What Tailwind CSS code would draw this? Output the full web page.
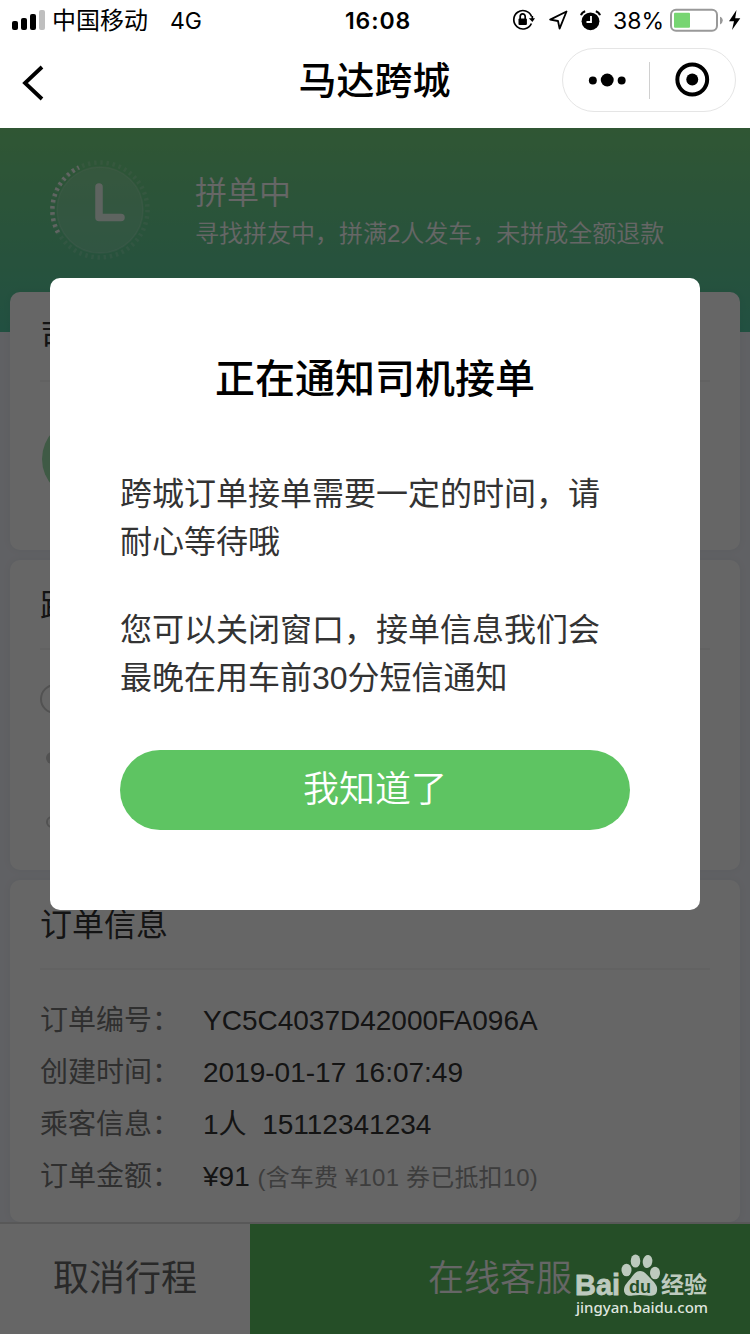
<!DOCTYPE html>
<html lang="zh-CN">
<head>
<meta charset="utf-8">
<title>马达跨城</title>
<script src="https://cdn.jsdelivr.net/npm/@tailwindcss/browser@4"></script>
</head>
<body class="w-[750px] h-[1334px] overflow-hidden bg-white font-['Liberation_Sans','Noto_Sans_CJK_SC',sans-serif] text-black">
<div class="relative flex flex-col w-[750px] h-[1334px] overflow-hidden">

  <!-- Status bar and navigation -->
  <header class="h-[128px] shrink-0 bg-white flex flex-col">
    <div class="h-10 grid grid-cols-[1fr_auto_1fr] items-center font-['Inter','Noto_Sans_CJK_SC',sans-serif] text-[24px] leading-10">
      <div class="flex items-center pl-3 -mt-px">
        <svg class="w-[34px] h-5" viewBox="0 0 34 20"><rect x="0" y="11" width="6" height="9" rx="2"/><rect x="9" y="8" width="6" height="12" rx="2"/><rect x="18" y="4" width="6" height="16" rx="2"/><rect x="27" y="0" width="6" height="20" rx="2" fill="#bfbfbf"/></svg>
        <span class="ml-[6px] mt-[2px]">中国移动</span><span class="ml-[22px] mt-[2px] text-[23px]">4G</span>
      </div>
      <div class="font-semibold text-[23px] tracking-[0.9px] pl-[6px]">16:08</div>
      <div class="flex items-center justify-end pr-2 -mt-px">
        <svg class="w-[24px] h-[22px]" viewBox="0 0 24 22" fill="none" stroke="#000" stroke-width="1.7"><path d="M19.4 14.5A9.2 9.2 0 1 1 19.6 7.5"/><path d="M16.8 9.2H23L20.4 13Z" fill="#000" stroke="none"/><path d="M20.3 7v3"/><rect x="6.5" y="9.6" width="8.4" height="6.4" rx="1" fill="#000" stroke="none"/><path d="M8.2 10V7.6a2.5 2.8 0 0 1 5 0V10"/></svg>
        <svg class="ml-[13px] w-[19px] h-[20px]" viewBox="0 0 19 20" fill="none" stroke="#000" stroke-width="1.8" stroke-linejoin="round"><path d="M17.5 1.5L1.2 9.6L9 11L10.6 18.6Z"/></svg>
        <svg class="ml-[12px] w-[21px] h-[21px]" viewBox="0 0 21 21"><circle cx="10.5" cy="11.3" r="8.9"/><path d="M1 5.2A6 6 0 0 1 5.2 1.2M20 5.2A6 6 0 0 0 15.8 1.2" stroke="#000" stroke-width="2" fill="none"/><path d="M11 6v6H6.5" stroke="#fff" stroke-width="1.8" fill="none"/></svg>
        <span class="ml-[12px] mt-[2px] text-[23px]">38%</span>
        <svg class="ml-[6px] w-[54px] h-[24px]" viewBox="0 0 54 24"><rect x="1" y="1.8" width="46" height="21" rx="5" fill="none" stroke="#999" stroke-width="2"/><rect x="4" y="4.8" width="16" height="15" rx="1" fill="#77d572"/><path d="M50 8.8a4 4 0 0 1 0 7.6Z" fill="#999"/></svg>
        <svg class="ml-[4px] w-[14px] h-[20px]" viewBox="0 0 14 20"><path d="M8.500 0L1 11.200H6L4 20L12.300 8.200H7.200Z"/></svg>
      </div>
    </div>
    <div class="flex-1 grid grid-cols-[1fr_auto_1fr] items-center">
      <svg class="ml-[21px] mt-[-2px] w-[24px] h-[36px]" viewBox="0 0 24 36" fill="none" stroke="#000" stroke-width="3.8"><path d="M21 2L4 18L21 34"/></svg>
      <h1 class="text-[38px] leading-[56px] font-medium mt-[-7px] -ml-px">马达跨城</h1>
      <div class="justify-self-end mr-[14px] mt-[-8px] w-[174px] h-16 rounded-full border border-[#e5e5e5] flex items-center">
        <svg class="w-[86px] h-[40px]" viewBox="0 0 86 40"><circle cx="30" cy="20.500" r="4"/><circle cx="44.500" cy="20" r="6.500"/><circle cx="59" cy="20.500" r="4"/></svg>
        <span class="w-px h-[37px] bg-[#d0d0d0]"></span>
        <svg class="w-[86px] h-[40px]" viewBox="0 0 86 40"><circle cx="42.500" cy="19.500" r="15" fill="none" stroke="#000" stroke-width="4"/><circle cx="42.500" cy="19.500" r="6"/></svg>
      </div>
    </div>
  </header>

  <main class="relative flex-1 flex flex-col bg-[#f0f2f9] overflow-hidden">
    <section class="h-[204px] shrink-0 bg-linear-to-b from-[#78d782] to-[#55c8a3] text-white flex items-start pl-[48px]">
      <svg class="mt-[30px] w-[104px] h-[104px]" viewBox="0 0 104 104" fill="none">
        <circle cx="52" cy="52" r="43" fill="#fff" fill-opacity=".15" stroke="#fff" stroke-opacity=".16" stroke-width="1.5"/>
        <circle cx="52" cy="52" r="47.5" stroke="#fff" stroke-opacity=".16" stroke-width="4.5" stroke-dasharray="2.4 3.817"/>
        <path d="M10 74.500A47.500 47.500 0 0 1 31 9.400" stroke="#fff" stroke-opacity=".9" stroke-width="4.500" stroke-dasharray="2.600 3.617"/>
        <path d="M51 29V59.500H73" stroke="#fff" stroke-opacity=".85" stroke-width="7.500" stroke-linecap="round" stroke-linejoin="round"/>
      </svg>
      <div class="ml-[43px] mt-[41px] font-[350]">
        <div class="text-[32px] leading-[48px]">拼单中</div>
        <div class="text-[24px] leading-[34px]">寻找拼友中，拼满2人发车，未拼成全额退款</div>
      </div>
    </section>

    <div class="-mt-10 px-[10px] flex flex-col gap-[10px]">
      <section class="h-[258px] bg-white rounded-[10px] px-[30px] shadow-[0_0_8px_rgba(0,0,60,0.05)]">
        <h2 class="h-[90px] border-b-2 border-[#f4f4f4] text-[32px] leading-[88px] text-[#333]">司机信息</h2>
        <div class="ml-[2px] mt-[37px] size-20 rounded-full bg-[#9fe0ac]"></div>
      </section>
      <section class="h-[310px] bg-white rounded-[10px] px-[30px] shadow-[0_0_8px_rgba(0,0,60,0.05)]">
        <h2 class="h-[90px] border-b-2 border-[#f4f4f4] text-[32px] leading-[92px] text-[#333]">路线信息</h2>
        <div class="mt-[34px] flex flex-col">
          <span class="size-[30px] rounded-full border-2 border-[#ccc]"></span>
          <span class="ml-[6px] mt-[38px] size-3 rounded-full bg-[#ccc]"></span>
          <span class="ml-[6px] mt-[52px] size-3 rounded-full border-2 border-[#ccc]"></span>
        </div>
      </section>
      <section class="h-[342px] bg-white rounded-[10px] px-[30px] shadow-[0_0_8px_rgba(0,0,60,0.05)]">
        <h2 class="h-[90px] border-b-2 border-[#f4f4f4] text-[32px] leading-[90px] text-[#333]">订单信息</h2>
        <dl class="mt-[25px] grid grid-cols-[163px_1fr] text-[28px] leading-[52px] text-[#333]">
          <dt class="text-[#777]">订单编号：</dt><dd>YC5C4037D42000FA096A</dd>
          <dt class="text-[#777]">创建时间：</dt><dd>2019-01-17 16:07:49</dd>
          <dt class="text-[#777]">乘客信息：</dt><dd>1人&nbsp; 15112341234</dd>
          <dt class="text-[#777]">订单金额：</dt><dd>¥91 <span class="text-[24px] tracking-[0.18px] text-[#999]">(含车费 ¥101 券已抵扣10)</span></dd>
        </dl>
      </section>
    </div>

    <footer class="h-[112px] shrink-0 border-t-2 border-[#dcdcdc] flex bg-white text-[36px] leading-[110px]">
      <div class="w-[250px] text-center text-[#666]">取消行程</div>
      <div class="flex-1 bg-[#5ec462] text-center text-white font-[350]">在线客服</div>
    </footer>

    <!-- Dialog -->
    <div class="absolute inset-0 bg-black/60 flex justify-center items-start pt-[150px]">
      <div class="w-[650px] h-[632px] rounded-[10px] bg-white px-[70px] flex flex-col">
        <h2 class="mt-[71px] text-center text-[40px] leading-[60px] font-medium">正在通知司机接单</h2>
        <div class="mt-[61px] text-[32px] leading-[48px] text-[#333] flex flex-col gap-10">
          <p>跨城订单接单需要一定的时间，请耐心等待哦</p>
          <p>您可以关闭窗口，接单信息我们会最晚在用车前30分短信通知</p>
        </div>
        <button class="mt-12 h-20 rounded-full bg-[#5ec462] text-white text-[36px] leading-[80px] font-[350]">我知道了</button>
      </div>
    </div>
  </main>

  <!-- Watermark -->
  <div class="absolute left-[575px] top-[1252px] w-[136px]">
    <svg class="w-[136px] h-[68px] overflow-visible" viewBox="0 0 136 68" fill="#bdcabe">
      <text x="0" y="42.500" font-family="Liberation Sans" font-weight="700" font-size="30" stroke="#bdcabe" stroke-width=".8" textLength="45" lengthAdjust="spacingAndGlyphs">Bai</text>
      <ellipse cx="51.500" cy="18" rx="5" ry="6.300"/><ellipse cx="60.500" cy="9" rx="4.800" ry="6.600"/><ellipse cx="72.500" cy="9.500" rx="4.800" ry="6.600" transform="rotate(8 72.500 9.500)"/><ellipse cx="80" cy="21" rx="5" ry="6.300"/>
      <path d="M65 19C70 19 73 24 76 27C80 31 83 34 82 39C81 44.500 76 44 72 43.500Q65 42.500 58 43.500C53 44.500 49 43 49 38C49 33 53 30 56 26C59 22 61 19 65 19Z"/>
      <text x="54" y="41" font-family="Liberation Sans" font-weight="700" font-size="19" fill="#244e28" textLength="22" lengthAdjust="spacingAndGlyphs">du</text>
      <text x="86" y="41" font-family="Noto Sans CJK SC" font-weight="700" font-size="23" textLength="46">经验</text>
      <text x="1" y="61" font-family="Noto Sans" font-weight="500" font-size="15" fill="#dfe5df" textLength="132">jingyan.baidu.com</text>
    </svg>
  </div>
</div>
</body>
</html>
